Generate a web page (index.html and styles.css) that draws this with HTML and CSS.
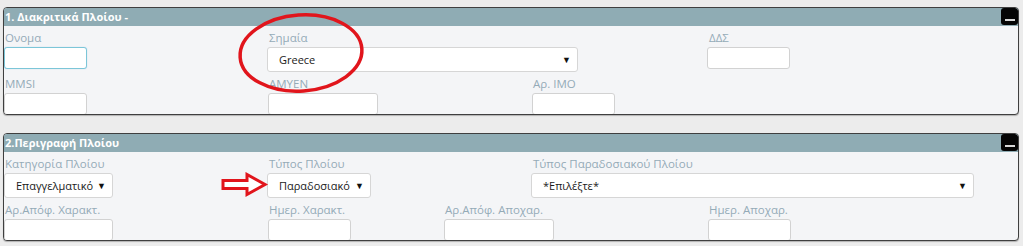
FILE: index.html
```html
<!DOCTYPE html>
<html lang="el">
<head>
  <meta charset="UTF-8" />
  <title>Στοιχεία Πλοίου</title>
  <link rel="stylesheet" href="styles.css">
</head>
<body>
  <div class="page">
    <div class="panel">
      <div class="panel-head">
        <span class="panel-title">1. Διακριτικά Πλοίου -</span>
        <button class="collapse-btn" type="button"><span></span></button>
      </div>
      <div class="panel-body">
        <div class="row">
          <div class="field col-0">
            <label for="name">Ονομα</label>
            <input id="name" class="w-83 focused" type="text" />
          </div>
          <div class="field col-3">
            <label for="flag">Σημαία</label>
            <div class="select-wrap w-311 shift"><select id="flag"><option>Greece</option></select></div>
          </div>
          <div class="field col-8">
            <label for="dds">ΔΔΣ</label>
            <input id="dds" class="w-83 shift" type="text" />
          </div>
        </div>
        <div class="row">
          <div class="field col-0">
            <label for="mmsi">MMSI</label>
            <input id="mmsi" class="w-83" type="text" />
          </div>
          <div class="field col-3">
            <label for="amyen">AMYEN</label>
            <input id="amyen" class="w-110" type="text" />
          </div>
          <div class="field col-6">
            <label for="imo">Αρ. IMO</label>
            <input id="imo" class="w-83" type="text" />
          </div>
        </div>
      </div>
    </div>

    <div class="panel">
      <div class="panel-head">
        <span class="panel-title">2.Περιγραφή Πλοίου</span>
        <button class="collapse-btn" type="button"><span></span></button>
      </div>
      <div class="panel-body">
        <div class="row">
          <div class="field col-0">
            <label for="category">Κατηγορία Πλοίου</label>
            <div class="select-wrap w-109"><select id="category"><option>Επαγγελματικό</option></select></div>
          </div>
          <div class="field col-3">
            <label for="type">Τύπος Πλοίου</label>
            <div class="select-wrap w-104 shift"><select id="type"><option>Παραδοσιακό</option></select></div>
          </div>
          <div class="field col-6">
            <label for="tradtype">Τύπος Παραδοσιακού Πλοίου</label>
            <div class="select-wrap w-443 shift"><select id="tradtype"><option>*Επιλέξτε*</option></select></div>
          </div>
        </div>
        <div class="row">
          <div class="field col-0">
            <label for="decno">Αρ.Απόφ. Χαρακτ.</label>
            <input id="decno" class="w-109" type="text" />
          </div>
          <div class="field col-3">
            <label for="decdate">Ημερ. Χαρακτ.</label>
            <input id="decdate" class="w-83" type="text" />
          </div>
          <div class="field col-5">
            <label for="undecno">Αρ.Απόφ. Αποχαρ.</label>
            <input id="undecno" class="w-110" type="text" />
          </div>
          <div class="field col-8">
            <label for="undecdate">Ημερ. Αποχαρ.</label>
            <input id="undecdate" class="w-83" type="text" />
          </div>
        </div>
      </div>
    </div>

    <svg class="mark-circle" width="140" height="90" viewBox="0 0 140 90">
      <ellipse cx="66" cy="44" rx="61" ry="38" transform="rotate(-4 66 44)" fill="none" stroke="#e1151c" stroke-width="3.5" />
    </svg>
    <svg class="mark-arrow" width="48" height="26" viewBox="0 0 48 26">
      <path d="M2 8.5 H26 V2.5 L44 12.5 L26 22.5 V16.5 H2 Z" fill="#fff" stroke="#e1151c" stroke-width="3" stroke-linejoin="miter" />
    </svg>
  </div>
</body>
</html>
```

FILE: styles.css
```css
body {
  margin: 0;
  padding: 0;
  background: #ececec;
  font-family: 'Open Sans', 'Noto Sans', sans-serif;
}
.page {
  position: relative;
  padding: 7px 0 0 3px;
  height: 239px;
}
.panel {
  box-sizing: border-box;
  width: 1016px;
  height: 108px;
  margin-bottom: 18px;
  background: #f4f5f7;
  border: 1px solid #3f3f3f;
  border-radius: 4px;
  box-shadow: 0 1px 1px rgba(0,0,0,0.25);
  overflow: hidden;
}
.panel-head {
  display: flex;
  justify-content: space-between;
  align-items: flex-start;
  height: 18px;
  background: #8facb4;
}
.panel-title {
  color: #fff;
  font-size: 11px;
  font-weight: bold;
  line-height: 18px;
  padding-left: 1px;
}
.collapse-btn {
  display: flex;
  justify-content: center;
  align-items: flex-end;
  width: 17px;
  height: 17px;
  padding: 0 0 4px 0;
  border: none;
  border-radius: 3px;
  background: #050505;
  box-sizing: border-box;
}
.collapse-btn span {
  display: block;
  width: 10px;
  height: 2px;
  background: #d8d8d8;
}
.row {
  display: grid;
  grid-template-columns: repeat(11, 88px);
  align-items: start;
}
.field {
  display: flex;
  flex-direction: column;
  align-items: flex-start;
}
.col-0 { grid-column: 1 / span 3; }
.col-3 { grid-column: 4 / span 2; }
.col-5 { grid-column: 6 / span 1; }
.col-6 { grid-column: 7 / span 5; }
.col-8 { grid-column: 9 / span 3; }
.row .col-3:last-child { grid-column: 4 / span 5; }
label {
  display: block;
  height: 21px;
  line-height: 23px;
  padding-left: 1px;
  font-size: 11.5px;
  color: #94abb7;
  white-space: nowrap;
}
input {
  box-sizing: border-box;
  height: 22px;
  margin: 0;
  padding: 0 6px;
  background: #fff;
  border: 1px solid #d2d2d2;
  border-radius: 3px;
  font-size: 12px;
}
input.focused {
  border-color: #7cc6d8;
  box-shadow: 0 0 1px rgba(102,175,233,0.5);
}
.shift {
  margin-left: -1px;
}
.select-wrap {
  position: relative;
  height: 25px;
}
.select-wrap select {
  -webkit-appearance: none;
  appearance: none;
  box-sizing: border-box;
  width: 100%;
  height: 25px;
  margin: 0;
  padding: 0 14px 0 11px;
  background: #fff;
  border: 1px solid #d6d6d6;
  border-radius: 3px;
  font-family: 'Open Sans', 'Noto Sans', sans-serif;
  font-size: 11px;
  color: #1a1a1a;
}
.select-wrap::after {
  content: "\25BC";
  position: absolute;
  right: 7px;
  top: 8px;
  font-size: 9px;
  line-height: 10px;
  color: #111;
  pointer-events: none;
}
.w-83 { width: 83px; }
.w-104 { width: 104px; }
.w-109 { width: 109px; }
.w-110 { width: 110px; }
.w-311 { width: 311px; }
.w-443 { width: 443px; }
.mark-circle {
  position: absolute;
  left: 235px;
  top: 9px;
}
.mark-arrow {
  position: absolute;
  left: 221px;
  top: 172px;
}
```
